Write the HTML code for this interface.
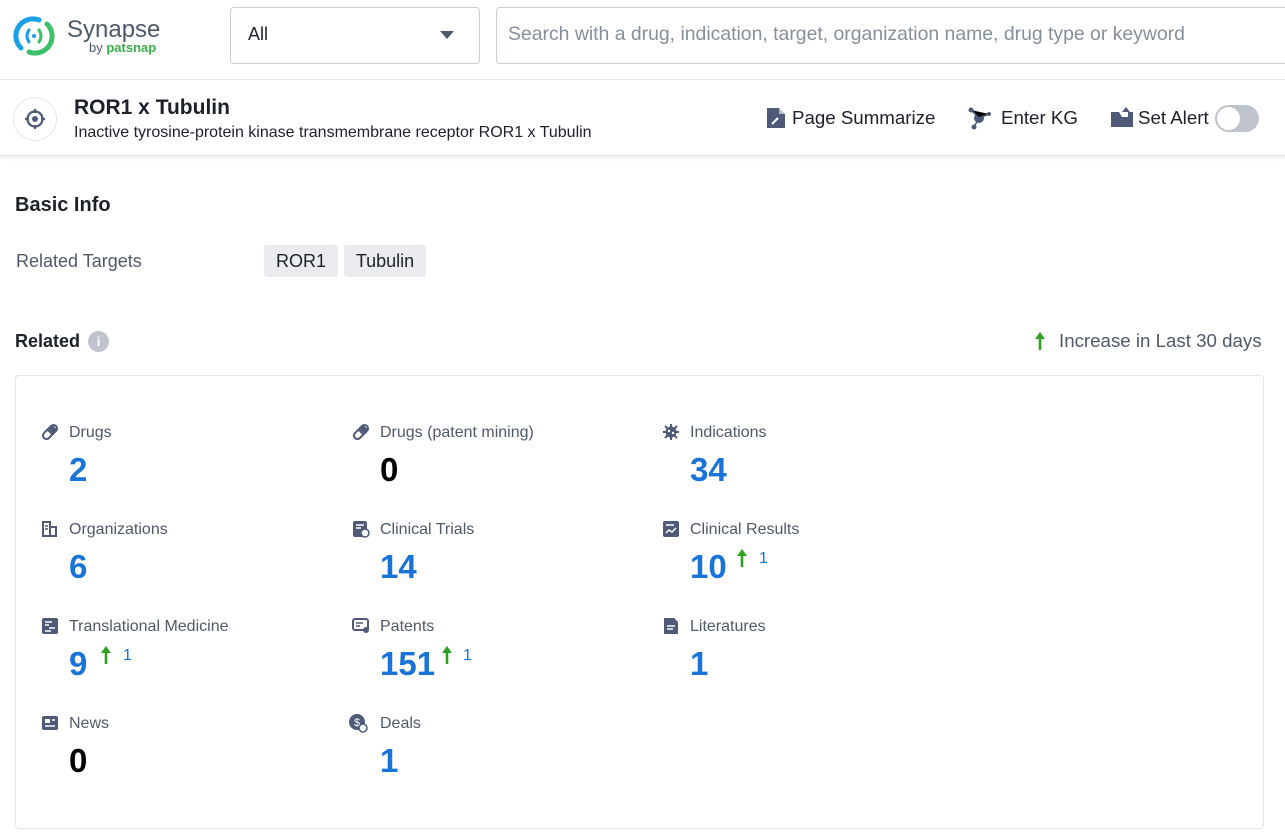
<!DOCTYPE html><html><head><style>
*{margin:0;padding:0;box-sizing:border-box}
body{width:1285px;height:840px;overflow:hidden;background:#fff;font-family:"Liberation Sans",sans-serif;color:#1d2129;position:relative}
.a{position:absolute}
.lbl{position:absolute;font-size:16px;color:#4e5969;line-height:18px}
.num{position:absolute;font-size:33px;line-height:36px;color:#1a73d6;font-weight:bold}
.up{position:absolute;width:12px;height:20px}
.sm{position:absolute;color:#1a73d6;font-size:16px}
.ic{position:absolute;width:18px;height:18px}
</style></head><body>
<svg width="0" height="0" style="position:absolute"><defs><symbol id="ar" viewBox="0 0 12 20"><path d="M6 19V4" stroke="#2ea121" stroke-width="2.6"/><path d="M1 8L6 1l5 7z" fill="#2ea121"/></symbol></defs></svg>
<!-- header -->
<svg class="a" style="left:13px;top:14px" width="42" height="44" viewBox="0 0 42 44">
<path d="M8 34 A17 17 0 0 1 26 6" fill="none" stroke="#1aa0e8" stroke-width="5" stroke-linecap="round"/>
<path d="M34 10 A17 17 0 0 1 16 38" fill="none" stroke="#3ec06a" stroke-width="5" stroke-linecap="round"/>
<path d="M16 16 Q12 22 16 28" fill="none" stroke="#1aa0e8" stroke-width="3" stroke-linecap="round"/>
<path d="M26 16 Q30 22 26 28" fill="none" stroke="#3ec06a" stroke-width="3" stroke-linecap="round"/>
<circle cx="21" cy="22" r="2" fill="#1aa0e8"/></svg>
<div class="a" style="left:67px;top:16px;font-size:24px;color:#4e5969">Synapse</div>
<div class="a" style="left:89px;top:40px;font-size:13px;color:#4e5969">by <span style="color:#3aae48;font-weight:bold">patsnap</span></div>
<div class="a" style="left:230px;top:7px;width:250px;height:57px;border:1px solid #c9cdd4;border-radius:4px"></div>
<div class="a" style="left:248px;top:24px;font-size:18px;color:#1d2129">All</div>
<div class="a" style="left:440px;top:31px;width:0;height:0;border-left:7px solid transparent;border-right:7px solid transparent;border-top:8px solid #4e5969"></div>
<div class="a" style="left:496px;top:7px;width:800px;height:57px;border:1px solid #c9cdd4;border-radius:4px"></div>
<div class="a" style="left:508px;top:23px;font-size:19.4px;color:#86909c">Search with a drug, indication, target, organization name, drug type or keyword</div>
<div class="a" style="left:0;top:79px;width:1285px;height:1px;background:#e5e6eb"></div>
<!-- subheader -->
<div class="a" style="left:0;top:80px;width:1285px;height:76px;box-shadow:0 2px 4px rgba(0,0,0,.08);border-bottom:1px solid #e5e6eb"></div>
<div class="a" style="left:13px;top:97px;width:44px;height:44px;border:1px solid #e5e6eb;border-radius:50%"></div>
<svg class="a" style="left:24px;top:108px" width="22" height="22" viewBox="0 0 22 22"><circle cx="11" cy="11" r="7.5" fill="none" stroke="#4e5a78" stroke-width="2.2"/><circle cx="11" cy="11" r="3" fill="#4e5a78"/><path d="M11 1v4M11 17v4M1 11h4M17 11h4" stroke="#4e5a78" stroke-width="2.2"/></svg>
<div class="a" style="left:74px;top:96px;font-size:21px;font-weight:bold">ROR1 x Tubulin</div>
<div class="a" style="left:74px;top:124px;font-size:16px;color:#1d2129">Inactive tyrosine-protein kinase transmembrane receptor ROR1 x Tubulin</div>
<svg class="a" style="left:765px;top:106px" width="22" height="24" viewBox="0 0 22 24"><path d="M2 2h12l6 6v14H2z" fill="#4e5a78"/><path d="M14 2v6h6" fill="#fff" opacity=".6"/><path d="M7 18l6-6" stroke="#fff" stroke-width="2"/></svg>
<div class="a" style="left:792px;top:107px;font-size:18.7px">Page Summarize</div>
<svg class="a" style="left:967px;top:106px" width="26" height="24" viewBox="0 0 26 24"><circle cx="12" cy="12" r="5" fill="#4e5a78"/><circle cx="4" cy="4" r="2.5" fill="#4e5a78"/><circle cx="22" cy="8" r="2" fill="#4e5a78"/><circle cx="7" cy="21" r="2.5" fill="#4e5a78"/><path d="M4 4l8 8 10-4M12 12l-5 9" stroke="#4e5a78" stroke-width="1.5"/></svg>
<div class="a" style="left:1001px;top:107px;font-size:18.7px">Enter KG</div>
<svg class="a" style="left:1110px;top:106px" width="24" height="22" viewBox="0 0 24 22"><path d="M1 6h8l3 5h6V6h5v15H1z" fill="#4e5a78"/><path d="M16 1l4 5h-8z" fill="#4e5a78"/></svg>
<div class="a" style="left:1138px;top:107px;font-size:18.7px">Set Alert</div>
<div class="a" style="left:1215px;top:105px;width:44px;height:27px;border-radius:14px;background:#bfc3cc"></div>
<div class="a" style="left:1217px;top:107px;width:23px;height:23px;border-radius:50%;background:#fff"></div>
<!-- basic info -->
<div class="a" style="left:15px;top:194px;font-size:20px;font-weight:bold">Basic Info</div>
<div class="a" style="left:16px;top:251px;font-size:18px;color:#4e5969">Related Targets</div>
<div class="a" style="left:264px;top:245px;width:74px;height:32px;background:#ebecef;border-radius:3px;font-size:18px;line-height:32px;text-align:center">ROR1</div>
<div class="a" style="left:344px;top:245px;width:82px;height:32px;background:#ebecef;border-radius:3px;font-size:18px;line-height:32px;text-align:center">Tubulin</div>
<div class="a" style="left:15px;top:331px;font-size:18px;font-weight:bold">Related</div>
<div class="a" style="left:88px;top:331px;width:21px;height:21px;border-radius:50%;background:#bfc3cc;color:#fff;font-size:13px;font-weight:bold;text-align:center;line-height:21px">i</div>
<svg class="up" style="left:1034px;top:331px"><use href="#ar"/></svg>
<div class="a" style="left:1059px;top:330px;font-size:18.7px;color:#4e5969">Increase in Last 30 days</div>
<div class="a" style="left:15px;top:375px;width:1249px;height:454px;border:1px solid #e5e6eb;border-radius:4px"></div>

<!-- items -->
<svg class="ic" style="left:41px;top:423px" viewBox="0 0 18 18"><rect x="0.5" y="5.5" width="17" height="7" rx="3.5" transform="rotate(-45 9 9)" fill="none" stroke="#4e5a78" stroke-width="2"/><path d="M6 6l6 6" stroke="#4e5a78" stroke-width="2"/><path d="M11 1.5l5.5 5.5-4 4-5.5-5.5z" fill="#4e5a78"/></svg>
<div class="lbl" style="left:69px;top:424px">Drugs</div><div class="num" style="left:69px;top:452px">2</div>
<svg class="ic" style="left:352px;top:423px" viewBox="0 0 18 18"><rect x="0.5" y="5.5" width="17" height="7" rx="3.5" transform="rotate(-45 9 9)" fill="none" stroke="#4e5a78" stroke-width="2"/><path d="M6 6l6 6" stroke="#4e5a78" stroke-width="2"/><path d="M11 1.5l5.5 5.5-4 4-5.5-5.5z" fill="#4e5a78"/></svg>
<div class="lbl" style="left:380px;top:424px">Drugs (patent mining)</div><div class="num" style="left:380px;top:452px;color:#000">0</div>
<svg class="ic" style="left:662px;top:423px" viewBox="0 0 18 18"><circle cx="9" cy="9" r="5.5" fill="#4e5a78"/><path d="M9 1v16M1 9h16M3 3l12 12M15 3L3 15" stroke="#4e5a78" stroke-width="2"/><circle cx="7" cy="8" r="1.2" fill="#fff"/><circle cx="11" cy="10" r="1.2" fill="#fff"/></svg>
<div class="lbl" style="left:690px;top:424px">Indications</div><div class="num" style="left:690px;top:452px">34</div>

<svg class="ic" style="left:41px;top:520px" viewBox="0 0 18 18"><path d="M2 2h7v14H2zM9 7h6v9H9" fill="none" stroke="#4e5a78" stroke-width="2"/><path d="M4 6h3M4 9h3" stroke="#4e5a78" stroke-width="1.5"/></svg>
<div class="lbl" style="left:69px;top:521px">Organizations</div><div class="num" style="left:69px;top:549px">6</div>
<svg class="ic" style="left:352px;top:520px" viewBox="0 0 18 18"><rect x="1" y="1" width="14" height="16" rx="2" fill="#4e5a78"/><path d="M4 5h8M4 8h5" stroke="#fff" stroke-width="1.5"/><circle cx="13" cy="13" r="4" fill="#fff" stroke="#4e5a78" stroke-width="1.5"/></svg>
<div class="lbl" style="left:380px;top:521px">Clinical Trials</div><div class="num" style="left:380px;top:549px">14</div>
<svg class="ic" style="left:662px;top:520px" viewBox="0 0 18 18"><rect x="1" y="1" width="16" height="16" rx="2" fill="#4e5a78"/><path d="M4 5h8M4 13l3-3 3 2 4-4" stroke="#fff" stroke-width="1.5" fill="none"/></svg>
<div class="lbl" style="left:690px;top:521px">Clinical Results</div><div class="num" style="left:690px;top:549px">10</div>
<svg class="up" style="left:736px;top:548px"><use href="#ar"/></svg><div class="sm" style="left:759px;top:550px">1</div>

<svg class="ic" style="left:41px;top:617px" viewBox="0 0 18 18"><rect x="1" y="1" width="16" height="16" rx="2" fill="#4e5a78"/><path d="M4 5h7M4 8h4M8 11h6M10 14H4" stroke="#fff" stroke-width="1.5"/></svg>
<div class="lbl" style="left:69px;top:618px">Translational Medicine</div><div class="num" style="left:69px;top:646px">9</div>
<svg class="up" style="left:100px;top:645px"><use href="#ar"/></svg><div class="sm" style="left:123px;top:647px">1</div>
<svg class="ic" style="left:352px;top:617px" viewBox="0 0 18 18"><rect x="1" y="2" width="15" height="11" rx="2" fill="none" stroke="#4e5a78" stroke-width="2"/><path d="M4 6h7M4 9h4" stroke="#4e5a78" stroke-width="1.5"/><circle cx="14" cy="13" r="3" fill="#4e5a78"/></svg>
<div class="lbl" style="left:380px;top:618px">Patents</div><div class="num" style="left:380px;top:646px">151</div>
<svg class="up" style="left:441px;top:645px"><use href="#ar"/></svg><div class="sm" style="left:463px;top:647px">1</div>
<svg class="ic" style="left:662px;top:617px" viewBox="0 0 18 18"><path d="M2 1h10l4 4v12H2z" fill="#4e5a78"/><path d="M5 9h8M5 12h6" stroke="#fff" stroke-width="1.5"/></svg>
<div class="lbl" style="left:690px;top:618px">Literatures</div><div class="num" style="left:690px;top:646px">1</div>

<svg class="ic" style="left:41px;top:714px" viewBox="0 0 18 18"><rect x="1" y="2" width="16" height="14" rx="2" fill="#4e5a78"/><rect x="4" y="5" width="5" height="4" fill="#fff"/><path d="M11 6h3M4 12h10" stroke="#fff" stroke-width="1.5"/></svg>
<div class="lbl" style="left:69px;top:715px">News</div><div class="num" style="left:69px;top:743px;color:#000">0</div>
<svg class="ic" style="left:348px;top:713px;width:20px;height:20px" viewBox="0 0 20 20"><circle cx="9" cy="9" r="8" fill="#4e5a78"/><text x="9" y="13" font-size="11" fill="#fff" text-anchor="middle" font-family="Liberation Sans">$</text><circle cx="15" cy="15" r="4" fill="#fff" stroke="#4e5a78" stroke-width="1.5"/></svg>
<div class="lbl" style="left:380px;top:715px">Deals</div><div class="num" style="left:380px;top:743px">1</div>
</body></html>
